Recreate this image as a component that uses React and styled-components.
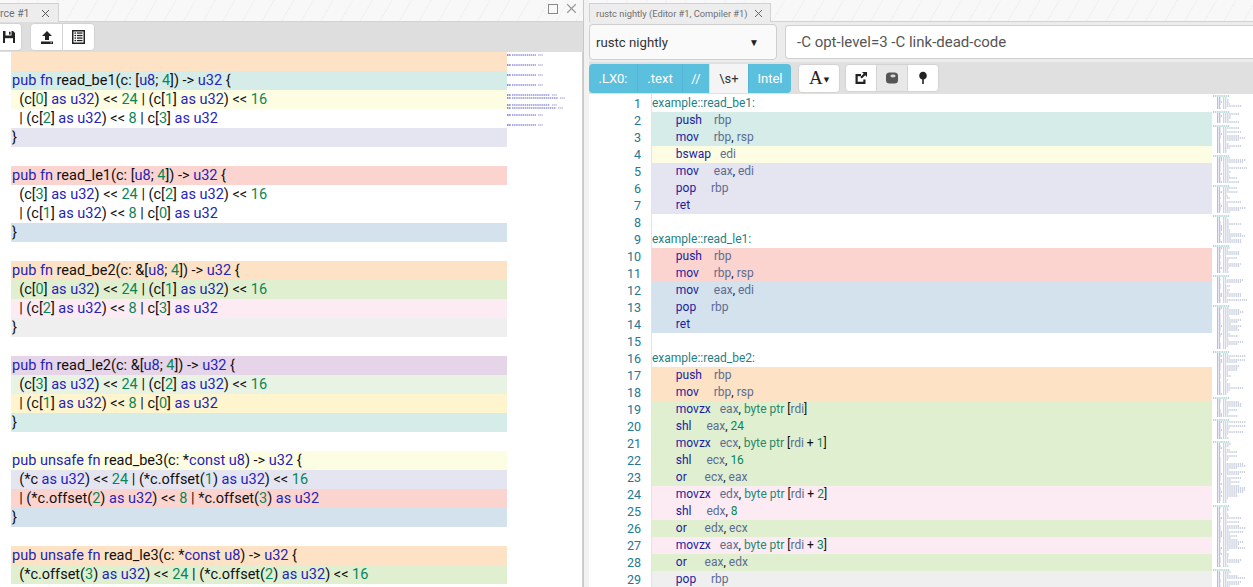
import React from "react";
import styled, { createGlobalStyle } from "styled-components";

const GlobalStyle = createGlobalStyle`
  html, body {
    margin: 0;
    padding: 0;
    background: #fff;
    overflow: hidden;
  }
  body {
    font-family: Roboto, "Liberation Sans", sans-serif;
  }
`;

const BG = {
  white: "transparent",
  teal: "#d5ece8",
  yellow: "#fdfde4",
  lav: "#e5e4f1",
  pink: "#fcd4cf",
  blue: "#d4e2ee",
  orange: "#fde2c5",
  green: "#e0efd0",
  pinkL: "#fcebf3",
  gray: "#efefef",
  purple: "#e6d4e8",
  greenL: "#e9f3e4",
  yellowD: "#fef5cf",
};

const RUST = [
  ["", BG.orange],
  ["pub fn read_be1(c: [u8; 4]) -> u32 {", BG.teal],
  ["  (c[0] as u32) << 24 | (c[1] as u32) << 16", BG.yellow],
  ["  | (c[2] as u32) << 8 | c[3] as u32", BG.white],
  ["}", BG.lav],
  ["", BG.white],
  ["pub fn read_le1(c: [u8; 4]) -> u32 {", BG.pink],
  ["  (c[3] as u32) << 24 | (c[2] as u32) << 16", BG.white],
  ["  | (c[1] as u32) << 8 | c[0] as u32", BG.white],
  ["}", BG.blue],
  ["", BG.white],
  ["pub fn read_be2(c: &[u8; 4]) -> u32 {", BG.orange],
  ["  (c[0] as u32) << 24 | (c[1] as u32) << 16", BG.green],
  ["  | (c[2] as u32) << 8 | c[3] as u32", BG.pinkL],
  ["}", BG.gray],
  ["", BG.white],
  ["pub fn read_le2(c: &[u8; 4]) -> u32 {", BG.purple],
  ["  (c[3] as u32) << 24 | (c[2] as u32) << 16", BG.greenL],
  ["  | (c[1] as u32) << 8 | c[0] as u32", BG.yellowD],
  ["}", BG.teal],
  ["", BG.white],
  ["pub unsafe fn read_be3(c: *const u8) -> u32 {", BG.yellow],
  ["  (*c as u32) << 24 | (*c.offset(1) as u32) << 16", BG.lav],
  ["  | (*c.offset(2) as u32) << 8 | *c.offset(3) as u32", BG.pink],
  ["}", BG.blue],
  ["", BG.white],
  ["pub unsafe fn read_le3(c: *const u8) -> u32 {", BG.orange],
  ["  (*c.offset(3) as u32) << 24 | (*c.offset(2) as u32) << 16", BG.green],
];

const ASM = [
  { label: "example::read_be1:" },
  { mn: "push", ops: "rbp", bg: BG.teal },
  { mn: "mov", ops: "rbp, rsp", bg: BG.teal },
  { mn: "bswap", ops: "edi", bg: BG.yellow },
  { mn: "mov", ops: "eax, edi", bg: BG.lav },
  { mn: "pop", ops: "rbp", bg: BG.lav },
  { mn: "ret", ops: "", bg: BG.lav },
  { blank: true },
  { label: "example::read_le1:" },
  { mn: "push", ops: "rbp", bg: BG.pink },
  { mn: "mov", ops: "rbp, rsp", bg: BG.pink },
  { mn: "mov", ops: "eax, edi", bg: BG.blue },
  { mn: "pop", ops: "rbp", bg: BG.blue },
  { mn: "ret", ops: "", bg: BG.blue },
  { blank: true },
  { label: "example::read_be2:" },
  { mn: "push", ops: "rbp", bg: BG.orange },
  { mn: "mov", ops: "rbp, rsp", bg: BG.orange },
  { mn: "movzx", ops: "eax, byte ptr [rdi]", bg: BG.green },
  { mn: "shl", ops: "eax, 24", bg: BG.green },
  { mn: "movzx", ops: "ecx, byte ptr [rdi + 1]", bg: BG.green },
  { mn: "shl", ops: "ecx, 16", bg: BG.green },
  { mn: "or", ops: "ecx, eax", bg: BG.green },
  { mn: "movzx", ops: "edx, byte ptr [rdi + 2]", bg: BG.pinkL },
  { mn: "shl", ops: "edx, 8", bg: BG.pinkL },
  { mn: "or", ops: "edx, ecx", bg: BG.green },
  { mn: "movzx", ops: "eax, byte ptr [rdi + 3]", bg: BG.pinkL },
  { mn: "or", ops: "eax, edx", bg: BG.green },
  { mn: "pop", ops: "rbp", bg: BG.gray },
];

const RUST_RE = /(\b(?:pub|fn|unsafe|const|as|u32|u8)\b|\b\d+\b)/;
const ASM_RE = /(byte ptr|\b\d+\b|\b[a-z]+\b)/;
const REGS = ["rbp", "rsp", "edi", "eax", "ecx", "edx", "rdi"];

const rustTokens = line =>
  line
    .split(RUST_RE)
    .filter(Boolean)
    .map((t, i) => {
      if (/^\d+$/.test(t)) return <Tok key={i} $c="#098658">{t}</Tok>;
      if (RUST_RE.test(t)) return <Tok key={i} $c="#2424b8">{t}</Tok>;
      return <Tok key={i} $c="#111">{t}</Tok>;
    });

const asmTokens = ops =>
  ops
    .split(ASM_RE)
    .filter(Boolean)
    .map((t, i) => {
      if (/^\d+$/.test(t)) return <Tok key={i} $c="#098658">{t}</Tok>;
      if (t === "byte ptr") return <Tok key={i} $c="#248a6e">{t}</Tok>;
      if (REGS.includes(t)) return <Tok key={i} $c="#5d6d92">{t}</Tok>;
      return <Tok key={i} $c="#111">{t}</Tok>;
    });

// minimap contents for the assembly pane
const MINI_FUNCS = [
  ["be1", 6], ["le1", 5], ["be2", 13], ["le2", 13], ["be3", 13], ["le3", 13],
  ["be4", 13], ["le4", 13], ["be5", 21], ["le5", 21], ["be6", 9], ["le6", 9],
  ["be7", 30], ["le7", 30], ["main", 40],
];

const miniLines = () => {
  const out = [];
  let seed = 7;
  const rnd = () => {
    seed = (seed * 9301 + 49297) % 233280;
    return seed / 233280;
  };
  MINI_FUNCS.forEach(([, n]) => {
    out.push({ label: true, w: 17 });
    for (let i = 0; i < n; i++) {
      const long = rnd() > 0.55;
      out.push({ mn: 3 + Math.round(rnd() * 2), op: long ? 14 + Math.round(rnd() * 10) : 3 + Math.round(rnd() * 5) });
    }
    out.push({ blank: true });
  });
  return out;
};

const MINI = miniLines();

const Page = styled.div`
  display: grid;
  grid-template-columns: 583px 6px 1fr;
  width: 1253px;
  height: 587px;
  overflow: hidden;
`;

const Panel = styled.section`
  display: flex;
  flex-direction: column;
  min-width: 0;
  overflow: hidden;
`;

const Divider = styled.div`
  background: #f2f2f2;
  border-left: 1px solid #c9c9c9;
`;

const TabBar = styled.div`
  height: 22px;
  box-sizing: border-box;
  display: flex;
  align-items: flex-end;
  border-bottom: 1px solid #d2d2d2;
  background: repeating-linear-gradient(120deg, #f8f8f8 0 16px, #f1f1f1 16px 17px);
  flex-shrink: 0;
`;

const Tab = styled.div`
  height: 19px;
  box-sizing: border-box;
  display: flex;
  align-items: center;
  gap: ${p => p.$gap}px;
  padding: 0 ${p => p.$padRight}px 0 ${p => p.$padLeft}px;
  background: #ededed;
  border: 1px solid #d2d2d2;
  border-left-width: ${p => (p.$cut ? 0 : 1)}px;
  border-bottom: none;
  margin-bottom: -1px;
  font-size: ${p => p.$size}px;
  color: #707070;
  white-space: nowrap;
`;

const WindowControls = styled.div`
  margin-left: auto;
  display: flex;
  align-items: center;
  gap: 8px;
  padding: 0 6px 4px 0;
  align-self: center;
`;

const Toolbar = styled.div`
  height: 30px;
  box-sizing: border-box;
  display: flex;
  align-items: center;
  gap: 8px;
  background: #dedede;
  flex-shrink: 0;
`;

const ButtonGroup = styled.div`
  display: flex;
`;

const IconButton = styled.button`
  width: ${p => p.$w}px;
  height: 28px;
  box-sizing: border-box;
  display: flex;
  align-items: center;
  justify-content: ${p => (p.$cut ? "flex-start" : "center")};
  padding: 0 0 0 ${p => (p.$cut ? 2 : 0)}px;
  background: ${p => (p.$pressed ? "#e8e8e8" : "#fff")};
  border: 1px solid #d3d3d3;
  border-left-width: ${p => (p.$cut ? 0 : 1)}px;
  margin-left: -1px;
  border-radius: 0;
  &:first-child {
    border-radius: ${p => (p.$cut ? "0 4px 4px 0" : "4px 0 0 4px")};
    margin-left: 0;
  }
  &:last-child {
    border-radius: 0 4px 4px 0;
  }
  &:only-child {
    border-radius: ${p => (p.$cut ? "0 4px 4px 0" : "4px")};
  }
`;

const EditorArea = styled.div`
  flex: 1;
  display: grid;
  grid-template-columns: 11px 496px 1fr;
  background: #fff;
  border-right: 1px solid #cfcfcf;
  min-height: 0;
  overflow: hidden;
`;

const RustLines = styled.div`
  padding-top: 0;
`;

const RustLine = styled.div`
  height: 19px;
  line-height: 19px;
  padding-left: 1px;
  font-family: Roboto, "Liberation Sans", sans-serif;
  font-size: 14.5px;
  white-space: pre;
  background: ${p => p.$bg};
`;

const Tok = styled.span`
  color: ${p => p.$c};
`;

const MiniMap = styled.div`
  background: #fff;
  overflow: hidden;
`;

const CompilerBar = styled.div`
  height: 40px;
  box-sizing: border-box;
  display: flex;
  align-items: center;
  gap: 8px;
  background: #ececec;
  flex-shrink: 0;
`;

const CompilerSelect = styled.div`
  width: 188px;
  height: 36px;
  box-sizing: border-box;
  display: flex;
  align-items: center;
  justify-content: space-between;
  padding: 0 17px 0 6px;
  background: #fafafa;
  border: 1px solid #cfcfcf;
  border-radius: 4px;
  font-size: 13.2px;
  color: #333;
  flex-shrink: 0;
`;

const Caret = styled.span`
  font-size: 10px;
  color: #222;
`;

const OptionsInput = styled.div`
  flex: 1;
  height: 34px;
  box-sizing: border-box;
  display: flex;
  align-items: center;
  padding-left: 11px;
  background: #fff;
  border: 1px solid #d0d0d0;
  border-right: none;
  border-radius: 4px 0 0 4px;
  font-size: 15px;
  color: #555;
  white-space: nowrap;
`;

const FilterBar = styled.div`
  height: 32px;
  box-sizing: border-box;
  display: flex;
  align-items: center;
  gap: 7px;
  background: #e0e0e0;
  flex-shrink: 0;
`;

const FilterGroup = styled.div`
  display: flex;
  border-radius: 4px;
  overflow: hidden;
`;

const FilterButton = styled.div`
  width: ${p => p.$w}px;
  height: 29px;
  box-sizing: border-box;
  display: flex;
  align-items: center;
  justify-content: center;
  font-size: 13px;
  background: ${p => (p.$on ? "#5bc0de" : "#f4f4f4")};
  color: ${p => (p.$on ? "#fff" : "#333")};
  border-left: 1px solid ${p => (p.$on ? "#52b5d3" : "#e2e2e2")};
  &:first-child {
    border-left: none;
  }
`;

const FontButton = styled.div`
  width: 42px;
  height: 29px;
  box-sizing: border-box;
  display: flex;
  align-items: center;
  justify-content: center;
  gap: 1px;
  background: #fff;
  border: 1px solid #d3d3d3;
  border-radius: 4px;
  font-family: "Liberation Serif", serif;
  font-size: 19px;
  color: #222;
  margin-right: -2px;
`;

const SmallCaret = styled.span`
  font-family: "DejaVu Sans", sans-serif;
  font-size: 7px;
  margin-top: 3px;
`;

const AsmArea = styled.div`
  flex: 1;
  display: grid;
  grid-template-columns: 62px 561px 1fr;
  background: #fff;
  min-height: 0;
  overflow: hidden;
`;

const Gutter = styled.div`
  text-align: right;
  padding-right: 10px;
  padding-top: 1px;
`;

const LineNo = styled.div`
  height: 17px;
  line-height: 17px;
  font-size: 12.5px;
  color: #237893;
`;

const AsmLines = styled.div`
  border-left: 1px solid #e4e4e4;
  padding-top: 1px;
`;

const AsmLine = styled.div`
  height: 17px;
  line-height: 17px;
  font-size: 12px;
  white-space: pre;
  background: ${p => p.$bg || "transparent"};
`;

const Label = styled.span`
  color: #1f7f84;
`;

const Mnemonic = styled.span`
  color: #1c1ca0;
`;

const Floppy = () => (
  <svg width="14" height="14" viewBox="0 0 14 14">
    <path d="M1 1h10l2 2v10H1z" fill="#222" />
    <rect x="3.5" y="1" width="6" height="4.5" fill="#fff" />
    <rect x="7" y="1.8" width="1.6" height="2.8" fill="#222" />
    <rect x="3" y="8.2" width="8" height="4.8" fill="#fff" />
  </svg>
);

const UploadIcon = () => (
  <svg width="14" height="14" viewBox="0 0 14 14">
    <path d="M7 1l5 5H9v4H5V6H2z" fill="#222" />
    <rect x="1" y="11.5" width="12" height="2.5" fill="#222" />
    <rect x="10.5" y="12.3" width="1.2" height="0.9" fill="#fff" />
  </svg>
);

const ListIcon = () => (
  <svg width="13" height="14" viewBox="0 0 13 14">
    <rect x="0.75" y="0.75" width="11.5" height="12.5" fill="none" stroke="#222" strokeWidth="1.5" />
    {[3, 5.5, 8, 10.5].map(y => (
      <g key={y}>
        <rect x="2.5" y={y - 0.6} width="1.6" height="1.3" fill="#222" />
        <rect x="5" y={y - 0.6} width="5.5" height="1.3" fill="#222" />
      </g>
    ))}
  </svg>
);

const ShareIcon = () => (
  <svg width="14" height="14" viewBox="0 0 14 14">
    <path d="M1.5 3h5.5v2.2H3.7v5.6h5.6V8.5h2.2V13h-10z" fill="#222" />
    <path d="M8 1h5v5l-1.8-1.8-3.4 3.4-1.5-1.5 3.4-3.4z" fill="#222" />
  </svg>
);

const OptIcon = () => (
  <svg width="14" height="14" viewBox="0 0 14 14">
    <rect x="1" y="1.5" width="12" height="11" rx="3.5" fill="#555" />
    <ellipse cx="8" cy="5" rx="2.6" ry="1.4" fill="#d8d8d8" />
  </svg>
);

const TreeIcon = () => (
  <svg width="14" height="14" viewBox="0 0 14 14">
    <path d="M7 0.8c2.3 0 3.8 1.8 3.8 3.9 0 2.2-1.6 3.8-3.8 3.8S3.2 6.9 3.2 4.7C3.2 2.6 4.7.8 7 .8z" fill="#222" />
    <rect x="6.2" y="7.5" width="1.6" height="5.5" fill="#222" />
  </svg>
);

const CloseGlyph = ({ color = "#777", size = 9 }) => (
  <svg width={size} height={size} viewBox="0 0 9 9">
    <path d="M1 1l7 7M8 1L1 8" stroke={color} strokeWidth="1" />
  </svg>
);

const MaxGlyph = () => (
  <svg width="10" height="10" viewBox="0 0 10 10">
    <rect x="0.5" y="0.5" width="9" height="9" fill="none" stroke="#888" strokeWidth="1" />
  </svg>
);

const RustMiniMap = () => {
  const rows = [36, 36, 36, 36, [50, 58], [50, 56], 36, 36];
  return (
    <svg width="76" height="100">
      {rows.map((r, i) => {
        const ws = Array.isArray(r) ? r : [r];
        return ws.map((w, j) => {
          const y = i * 10 + 3 + j * 3;
          return (
            <g key={`${i}-${j}`} opacity="0.8" strokeWidth="1.3" strokeDasharray="1.5 0.6">
              <line x1="0" y1={y} x2="4" y2={y} stroke="#4848d0" />
              <line x1="5" y1={y} x2={w - 7} y2={y} stroke="#7a7ad0" />
              <line x1={w - 5} y1={y} x2={w} y2={y} stroke="#a8a8dc" />
            </g>
          );
        });
      })}
    </svg>
  );
};

const AsmMiniMap = () => (
  <svg width="41" height="493">
    {MINI.map((l, i) => {
      const y = i * 2 + 2;
      if (l.blank) return null;
      if (l.label)
        return (
          <line key={i} x1="1" y1={y} x2={1 + l.w} y2={y} stroke="#3a9a9a" strokeWidth="1" strokeDasharray="1.3 0.8" opacity="0.75" />
        );
      return (
        <g key={i} opacity="0.7" strokeWidth="1" strokeDasharray="1.3 0.8">
          <line x1="5" y1={y} x2={5 + l.mn} y2={y} stroke="#3c3cb4" />
          <line x1="11" y1={y} x2={11 + l.op} y2={y} stroke="#7484ac" />
        </g>
      );
    })}
  </svg>
);

const SourcePanel = () => (
  <Panel>
    <TabBar>
      <Tab $padLeft={0} $padRight={8} $gap={11} $size={10.5} $cut>
        rce #1
        <CloseGlyph color="#555" />
      </Tab>
      <WindowControls>
        <MaxGlyph />
        <CloseGlyph color="#999" size={11} />
      </WindowControls>
    </TabBar>
    <Toolbar>
      <ButtonGroup>
        <IconButton $w={22} $cut>
          <Floppy />
        </IconButton>
      </ButtonGroup>
      <ButtonGroup>
        <IconButton $w={33}>
          <UploadIcon />
        </IconButton>
        <IconButton $w={33}>
          <ListIcon />
        </IconButton>
      </ButtonGroup>
    </Toolbar>
    <EditorArea>
      <div />
      <RustLines>
        {RUST.map(([text, bg], i) => (
          <RustLine key={i} $bg={bg}>
            {text ? rustTokens(text) : " "}
          </RustLine>
        ))}
      </RustLines>
      <MiniMap>
        <RustMiniMap />
      </MiniMap>
    </EditorArea>
  </Panel>
);

const FILTERS = [
  [".LX0:", 48, true],
  [".text", 45, true],
  ["//", 27, true],
  ["\\s+", 39, false],
  ["Intel", 43, true],
];

const CompilerPanel = () => (
  <Panel>
    <TabBar>
      <Tab $padLeft={6} $padRight={7} $gap={6} $size={9.3}>
        rustc nightly (Editor #1, Compiler #1)
        <CloseGlyph color="#666" />
      </Tab>
    </TabBar>
    <CompilerBar>
      <CompilerSelect>
        rustc nightly
        <Caret>▼</Caret>
      </CompilerSelect>
      <OptionsInput>-C opt-level=3 -C link-dead-code</OptionsInput>
    </CompilerBar>
    <FilterBar>
      <FilterGroup>
        {FILTERS.map(([label, w, on]) => (
          <FilterButton key={label} $w={w} $on={on}>
            {label}
          </FilterButton>
        ))}
      </FilterGroup>
      <FontButton>
        A<SmallCaret>▼</SmallCaret>
      </FontButton>
      <ButtonGroup>
        <IconButton $w={32}>
          <ShareIcon />
        </IconButton>
        <IconButton $w={32} $pressed>
          <OptIcon />
        </IconButton>
        <IconButton $w={32}>
          <TreeIcon />
        </IconButton>
      </ButtonGroup>
    </FilterBar>
    <AsmArea>
      <Gutter>
        {ASM.map((_, i) => (
          <LineNo key={i}>{i + 1}</LineNo>
        ))}
      </Gutter>
      <AsmLines>
        {ASM.map((l, i) => {
          if (l.blank) return <AsmLine key={i}> </AsmLine>;
          if (l.label)
            return (
              <AsmLine key={i}>
                <Label>{l.label}</Label>
              </AsmLine>
            );
          return (
            <AsmLine key={i} $bg={l.bg}>
              {"        "}
              <Mnemonic>{l.mn.padEnd(8, " ")}</Mnemonic>
              {asmTokens(l.ops)}
            </AsmLine>
          );
        })}
      </AsmLines>
      <MiniMap>
        <AsmMiniMap />
      </MiniMap>
    </AsmArea>
  </Panel>
);

const App = () => (
  <>
    <GlobalStyle />
    <Page>
      <SourcePanel />
      <Divider />
      <CompilerPanel />
    </Page>
  </>
);

export default App;
